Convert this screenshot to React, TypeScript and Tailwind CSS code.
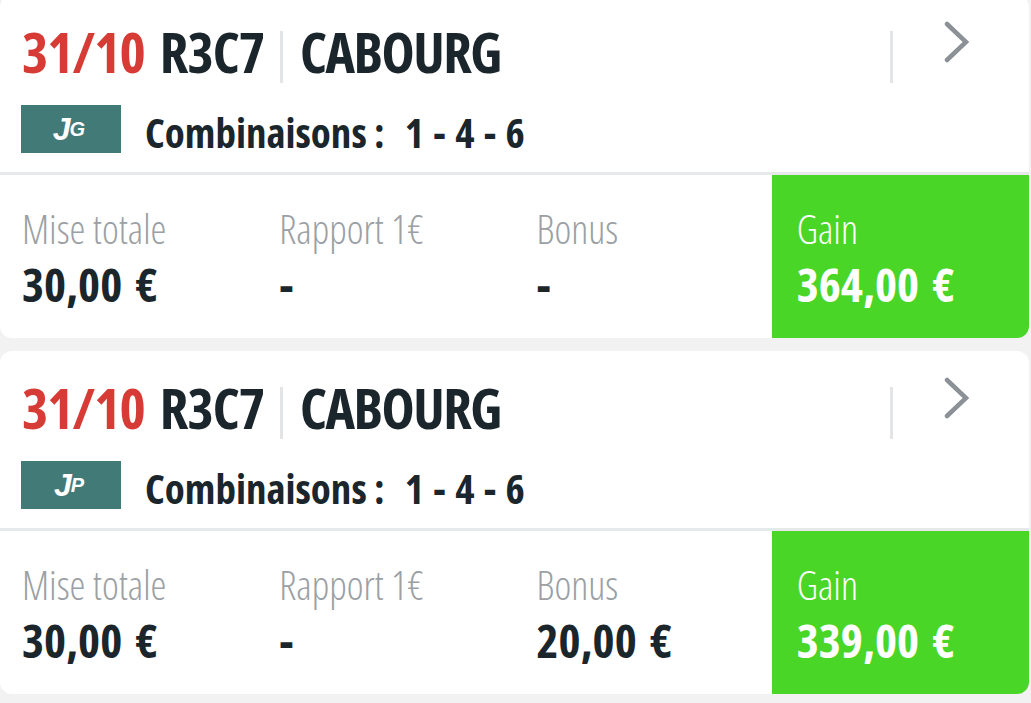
import React from "react";

type Bet = {
  date: string;
  race: string;
  venue: string;
  badge: [string, string];
  combo: string;
  mise: string;
  rapport: string;
  bonus: string;
  gain: string;
};

const bets: Bet[] = [
  { date: "31/10", race: "R3C7", venue: "CABOURG", badge: ["J", "G"], combo: "1 - 4 - 6", mise: "30,00 €", rapport: "-", bonus: "-", gain: "364,00 €" },
  { date: "31/10", race: "R3C7", venue: "CABOURG", badge: ["J", "P"], combo: "1 - 4 - 6", mise: "30,00 €", rapport: "-", bonus: "20,00 €", gain: "339,00 €" },
];

const Chevron = () => (
  <svg width="26" height="42" viewBox="0 0 26 42" fill="none">
    <path d="M3 3 L22 21 L3 39" stroke="#8b9197" strokeWidth="4.5" strokeLinecap="round" strokeLinejoin="miter" />
  </svg>
);

const Cell = ({ label, value, green }: { label: string; value: string; green?: boolean }) => (
  <div className={green ? "bg-[#4ad626] rounded-br-[12px] pl-[25px] pt-[30px]" : "pl-[22px] pt-[30px]"}>
    <div className={`text-[40px] leading-[48px] font-light ${green ? "text-white" : "text-[#9ba0a4]"}`}>{label}</div>
    <div className={`text-[47px] leading-[62px] font-bold [word-spacing:5px] ${green ? "text-white" : "text-[#1b262c]"}`}>{value}</div>
  </div>
);

const Badge = ({ letters }: { letters: [string, string] }) => (
  <div className="w-[100px] h-[48px] shrink-0 bg-[#427a78] flex items-center justify-center pr-[4px] text-white italic font-black font-['Liberation_Sans',Arial,sans-serif] [font-stretch:normal]">
    <span className="text-[32px] leading-none tracking-[-1px]">{letters[0]}</span>
    <span className="text-[20px] leading-none">{letters[1]}</span>
  </div>
);

const Card = ({ bet, first }: { bet: Bet; first?: boolean }) => (
  <div className={`bg-white rounded-[12px] w-[1029px] ${first ? "-mt-[5px]" : ""}`}>
    <div className="h-[177px] pt-[22px] pl-[21px] relative">
      <div className="flex items-center h-[68px] tracking-[-1px] pl-[1px]">
        <span className="text-[56px] font-bold text-[#d63b36]">{bet.date}</span>
        <span className="text-[56px] font-bold text-[#1b262c] ml-[15px]">{bet.race}</span>
        <span className="w-[3px] h-[52px] mt-[12px] bg-[#e3e4e6] ml-[16px] mr-[17px]" />
        <span className="text-[56px] font-bold text-[#1b262c] tracking-[-1.5px]">{bet.venue}</span>
        <span className="w-[3px] h-[52px] mt-[12px] bg-[#e3e4e6] ml-auto mr-[136px]" />
      </div>
      <div className="absolute left-[944px] top-[26px]">
        <Chevron />
      </div>
      <div className="flex items-start mt-[20px]">
        <Badge letters={bet.badge} />
        <span className="ml-[24px] mt-[3px] leading-[48px] text-[41px] font-bold text-[#1b262c]">Combinaisons :</span>
        <span className="ml-[20px] mt-[3px] leading-[48px] text-[41px] font-bold text-[#1b262c] [word-spacing:2px]">{bet.combo}</span>
      </div>
    </div>
    <div className="h-[3px] bg-[#e6e8ea]" />
    <div className="grid grid-cols-4 h-[163px]">
      <Cell label="Mise totale" value={bet.mise} />
      <Cell label="Rapport 1€" value={bet.rapport} />
      <Cell label="Bonus" value={bet.bonus} />
      <Cell label="Gain" value={bet.gain} green />
    </div>
  </div>
);

export default function App() {
  return (
    <div className="w-[1031px] h-[703px] overflow-hidden bg-[#f2f2f2] font-['Open_Sans','DejaVu_Sans_Condensed',sans-serif] [font-stretch:75%] flex flex-col gap-[13px]">
      {bets.map((b, i) => (
        <Card key={i} bet={b} first={i === 0} />
      ))}
    </div>
  );
}
